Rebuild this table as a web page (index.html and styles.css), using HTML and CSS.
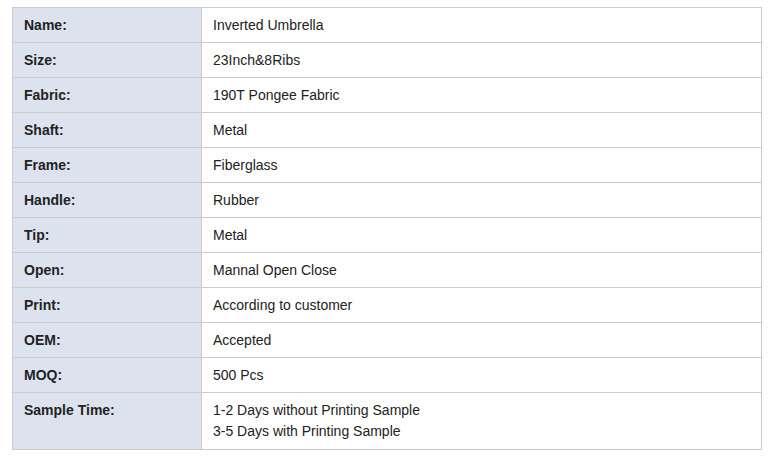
FILE: index.html
```html
<!DOCTYPE html>
<html>
<head>
<meta charset="utf-8">
<link rel="stylesheet" href="styles.css">
</head>
<body>
<table class="spec">
<tr><th>Name:</th><td>Inverted Umbrella</td></tr>
<tr><th>Size:</th><td>23Inch&amp;8Ribs</td></tr>
<tr><th>Fabric:</th><td>190T Pongee Fabric</td></tr>
<tr><th>Shaft:</th><td>Metal</td></tr>
<tr><th>Frame:</th><td>Fiberglass</td></tr>
<tr><th>Handle:</th><td>Rubber</td></tr>
<tr><th>Tip:</th><td>Metal</td></tr>
<tr><th>Open:</th><td>Mannal Open Close</td></tr>
<tr><th>Print:</th><td>According to customer</td></tr>
<tr><th>OEM:</th><td>Accepted</td></tr>
<tr><th>MOQ:</th><td>500 Pcs</td></tr>
<tr class="last"><th>Sample Time:</th><td>1-2 Days without Printing Sample<br>3-5 Days with Printing Sample</td></tr>
</table>
</body>
</html>
```
FILE: styles.css
```css
html, body {
  margin: 0;
  padding: 0;
  background: #fff;
}
body {
  padding: 7px 0 0 12px;
  font-family: "Liberation Sans", Arial, sans-serif;
  font-size: 14px;
  color: #222;
}
.spec {
  border-collapse: collapse;
  width: 750px;
}
.spec th, .spec td {
  border: 1px solid #cbcbcb;
  padding: 7px 11px 6px;
  line-height: 21px;
  vertical-align: top;
  text-align: left;
}
.spec .last th, .spec .last td {
  padding-bottom: 7px;
}
.spec th {
  width: 166px;
  background: #dce3ee;
  font-weight: bold;
}
.spec td {
  background: #fff;
}
```
